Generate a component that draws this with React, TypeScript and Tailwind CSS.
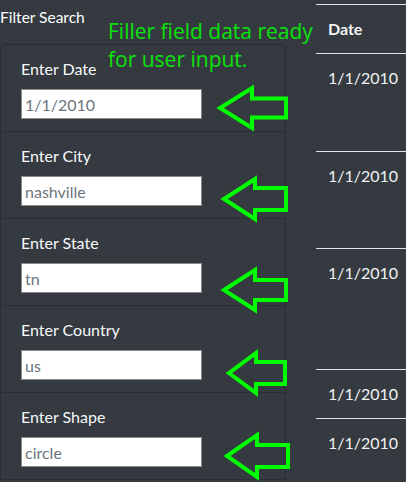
import React from "react";

const fields = [
  { label: "Enter Date", value: "1/1/2010" },
  { label: "Enter City", value: "nashville" },
  { label: "Enter State", value: "tn" },
  { label: "Enter Country", value: "us" },
  { label: "Enter Shape", value: "circle" },
];

// tip x, tip y, head x, half-height of head, shaft half-height, tail x
const arrows = [
  { tx: 220, ty: 108, hx: 252, hh: 20, sh: 9.5, ex: 286 },
  { tx: 224, ty: 199, hx: 255, hh: 20, sh: 11, ex: 286 },
  { tx: 224, ty: 290, hx: 255, hh: 20, sh: 10, ex: 286 },
  { tx: 229, ty: 373, hx: 256, hh: 20, sh: 11, ex: 285 },
  { tx: 227, ty: 456, hx: 257, hh: 21, sh: 11, ex: 288 },
];

const rows = ["h-[98px]", "h-[97px]", "h-[121px]", "h-[49px]", "h-[80px]"];

export default function App() {
  return (
    <div className="relative h-[482px] w-[406px] overflow-hidden bg-[#343a40] font-['Segoe_UI',Lato,sans-serif] text-white">
      <div className="flex">
        <div className="w-[286px] shrink-0">
          <div className="h-[44px] pt-[5px] text-[15.5px] leading-6">Filter Search</div>
          <ul className="rounded-t border border-[#2b2f34]">
            {fields.map((f, i) => (
              <li key={f.label} className={`px-5 pt-3 pb-3 ${i < fields.length - 1 ? "border-b border-[#2b2f34]" : ""}`}>
                <label className="mb-2 block text-base leading-6 text-[#f8f9fa]">{f.label}</label>
                <input
                  readOnly
                  value={f.value}
                  className="block h-[30px] w-[181px] border border-[#8a8a8a] bg-white px-[3px] text-base text-[#6c757d] outline-none"
                />
              </li>
            ))}
          </ul>
        </div>

        <div className="ml-[30px] flex-1 pt-[4px] text-base text-[#f1f3f5]">
          <div className="h-[49px] border-t border-[#dee2e6] p-3 font-bold leading-6">Date</div>
          {rows.map((h, i) => (
            <div key={i} className={`${h} border-t border-[#dee2e6] p-3 leading-6`}>
              1/1/2010
            </div>
          ))}
        </div>
      </div>

      <div className="absolute left-[108px] top-[17px] font-['Open_Sans',sans-serif] text-[21px] leading-[28px] text-[#0be20b]">
        Filler field data ready
        <br />
        for user input.
      </div>

      <svg className="pointer-events-none absolute left-0 top-0" width="406" height="482">
        {arrows.map((a, i) => (
          <polygon
            key={i}
            points={`${a.tx},${a.ty} ${a.hx},${a.ty - a.hh} ${a.hx},${a.ty - a.sh} ${a.ex},${a.ty - a.sh} ${a.ex},${a.ty + a.sh} ${a.hx},${a.ty + a.sh} ${a.hx},${a.ty + a.hh}`}
            fill="none"
            stroke="#00ff00"
            strokeWidth="4"
            strokeLinejoin="miter"
          />
        ))}
      </svg>
    </div>
  );
}
